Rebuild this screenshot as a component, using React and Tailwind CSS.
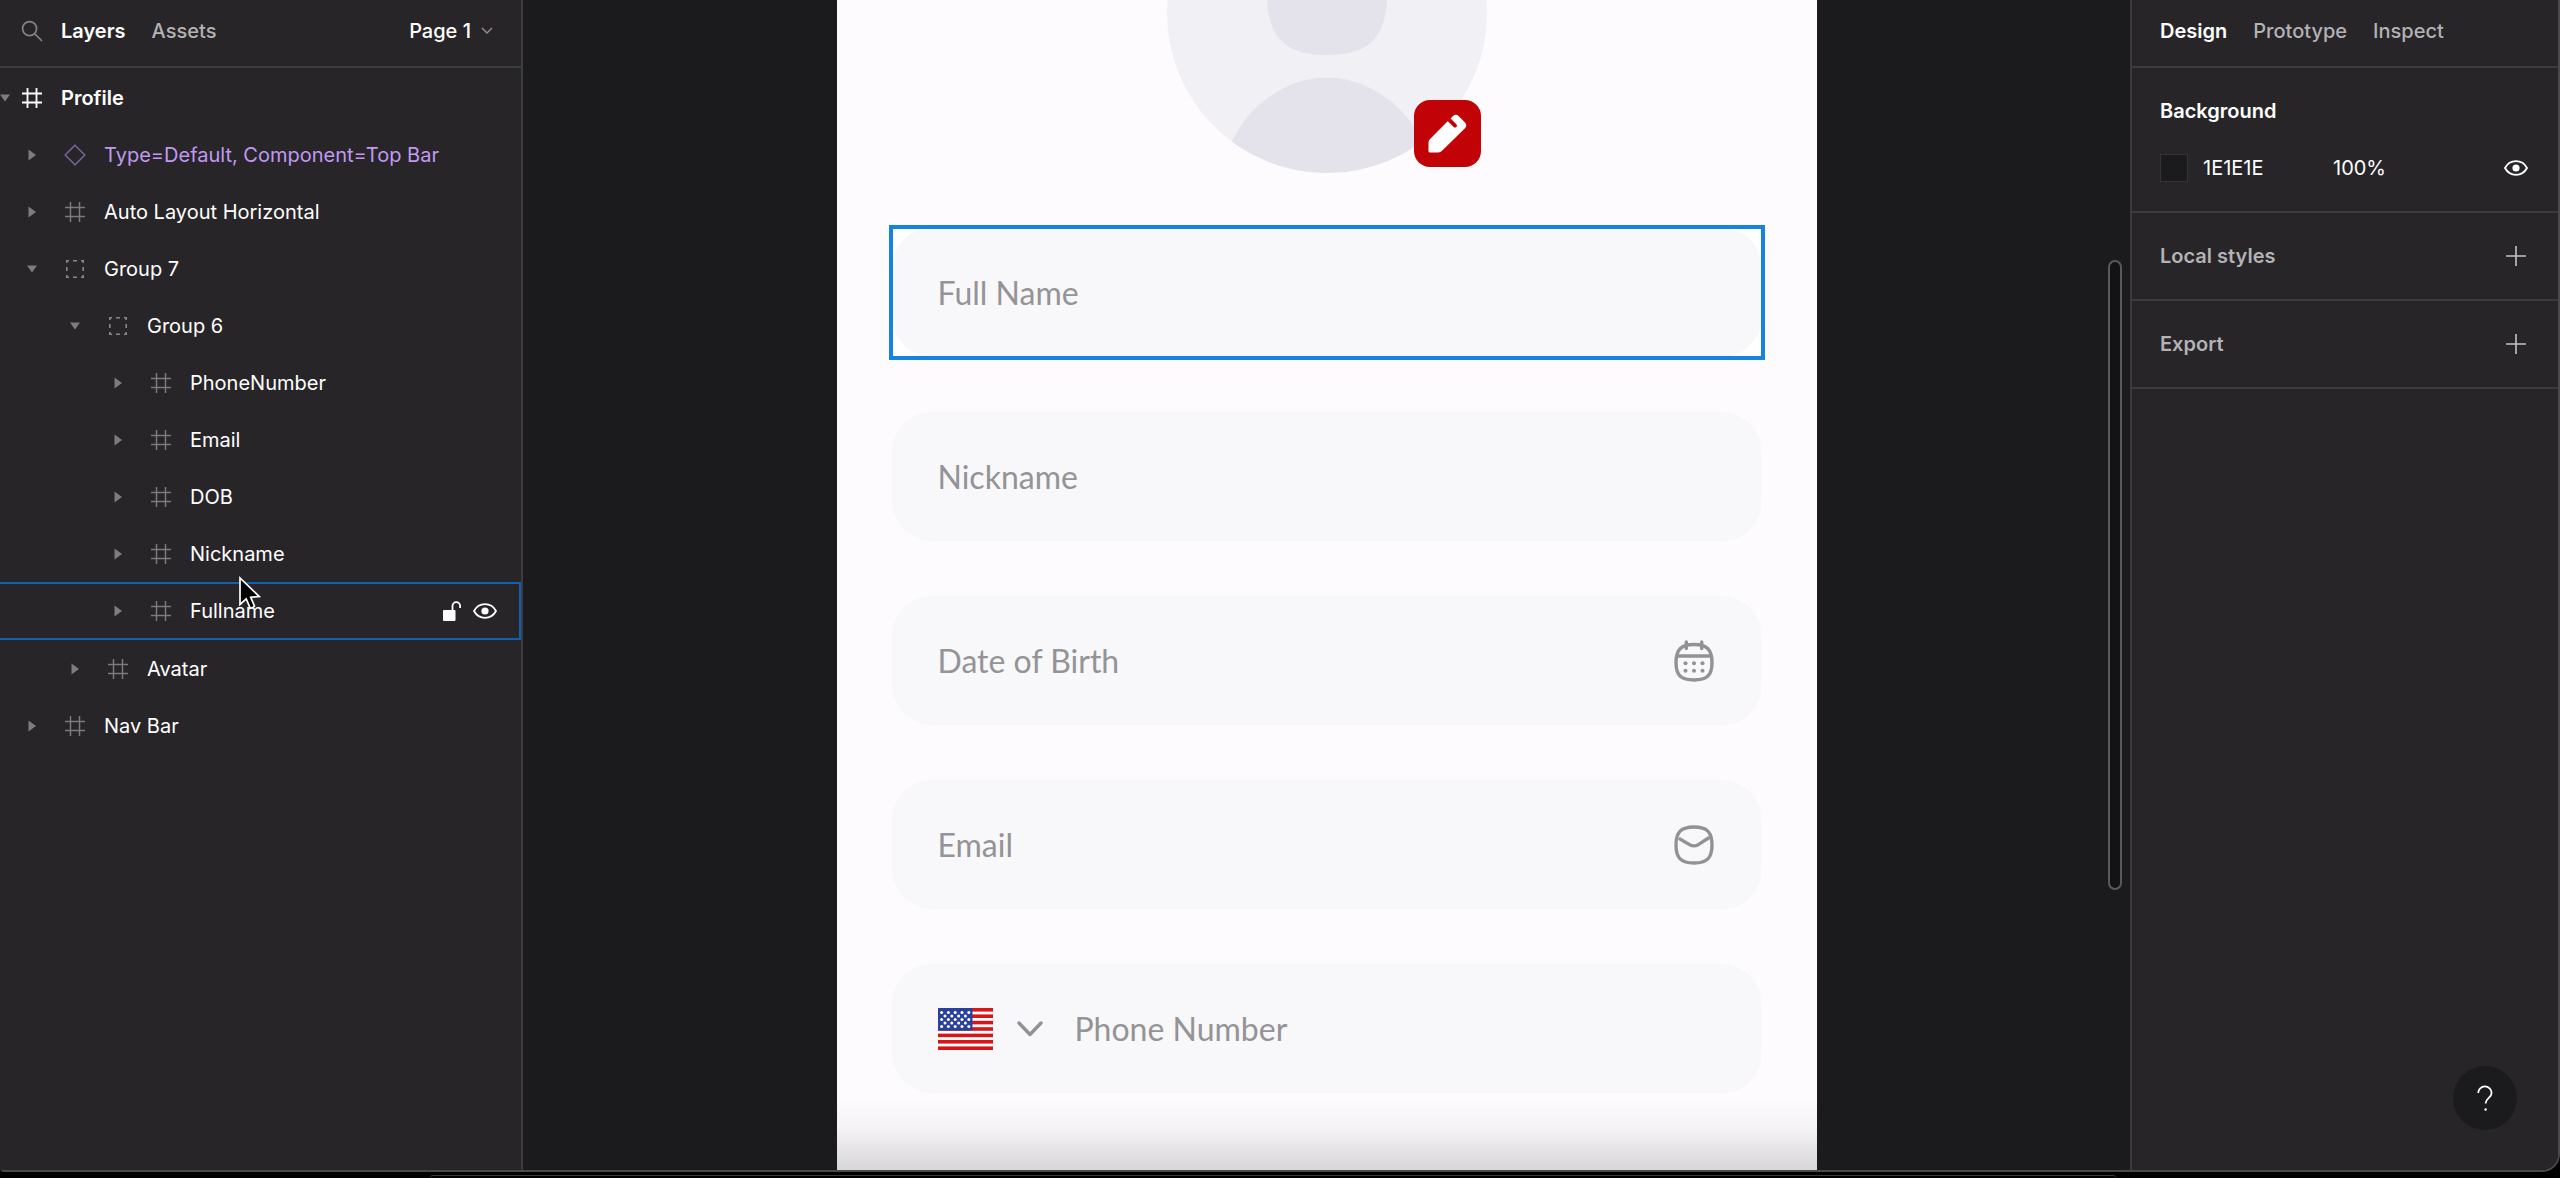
import { useState } from "react";

const LAYERS = [
    { name: "Profile", depth: 0, icon: "frame", open: true },
    { name: "Type=Default, Component=Top Bar", depth: 1, icon: "component" },
    { name: "Auto Layout Horizontal", depth: 1, icon: "frame" },
    { name: "Group 7", depth: 1, icon: "group", open: true },
    { name: "Group 6", depth: 2, icon: "group", open: true },
    { name: "PhoneNumber", depth: 3, icon: "frame" },
    { name: "Email", depth: 3, icon: "frame" },
    { name: "DOB", depth: 3, icon: "frame" },
    { name: "Nickname", depth: 3, icon: "frame" },
    { name: "Fullname", depth: 3, icon: "frame", hovered: true },
    { name: "Avatar", depth: 2, icon: "frame" },
    { name: "Nav Bar", depth: 1, icon: "frame" },
];

const INDENT = ["pl-0", "pl-[10px]", "pl-[53px]", "pl-[96px]"];

/* ---------- Icons ---------- */

function SearchIcon() {
    return (
        <svg width="22" height="22" viewBox="0 0 22 22" fill="none" stroke="#828184" strokeWidth="1.7">
            <circle cx="8.6" cy="8.6" r="7" />
            <path d="M13.8 13.8L21 21" />
        </svg>
    );
}

function CaretIcon({ open }) {
    return (
        <svg width="10" height="12" viewBox="0 0 10 12" fill="#7d7c7f">
            {open ? <path d="M0 2.500h10L5 9.500z" /> : <path d="M1.500 0.500v11L9 6z" />}
        </svg>
    );
}

function LayerIcon({ type, active }) {
    if (type === "component") {
        return (
            <svg width="22" height="22" viewBox="0 0 22 22" fill="none" stroke="#75619a" strokeWidth="1.6">
                <path d="M11 1.2L20.8 11L11 20.8L1.2 11z" />
            </svg>
        );
    }
    if (type === "group") {
        return (
            <svg width="20" height="20" viewBox="0 0 20 20" fill="none" stroke="#878689" strokeWidth="1.6">
                <path d="M1.8 4V1.8H4M8 1.8h4M16 1.8h2.2V4M18.2 8v4M18.2 16v2.2H16M12 18.2H8M4 18.2H1.8V16M1.8 12V8" />
            </svg>
        );
    }
    return (
        <svg
            width="20"
            height="20"
            viewBox="0 0 20 20"
            fill="none"
            stroke={active ? "#ffffff" : "#7b7a7d"}
            strokeWidth={active ? 1.8 : 1.5}
        >
            <path d="M5.5 0v20M14.5 0v20M0 5.5h20M0 14.5h20" />
        </svg>
    );
}

function EyeIcon() {
    return (
        <svg width="24" height="16" viewBox="0 0 24 16" fill="none" stroke="#ffffff" strokeWidth="1.8">
            <path d="M1 8C3.4 3.6 7.4 1.2 12 1.2S20.600 3.600 23 8c-2.400 4.400-6.400 6.800-11 6.800S3.400 12.400 1 8z" />
            <circle cx="12" cy="8" r="3.6" fill="#ffffff" stroke="none" />
        </svg>
    );
}

function UnlockIcon() {
    return (
        <svg width="18" height="20" viewBox="0 0 18 20" fill="none">
            <rect x="0" y="9" width="12.500" height="11" rx="1" fill="#ffffff" />
            <path d="M9.500 9V5a3.800 3.800 0 0 1 7.600 0v2" stroke="#ffffff" strokeWidth="1.8" />
        </svg>
    );
}

function PlusIcon() {
    return (
        <svg width="20" height="20" viewBox="0 0 20 20" stroke="#c4c3c6" strokeWidth="1.6">
            <path d="M10 0v20M0 10h20" />
        </svg>
    );
}

function CalendarIcon() {
    return (
        <svg width="40" height="42" viewBox="0 0 40 42" fill="none" stroke="#929194" strokeWidth="3.400" strokeLinecap="round">
            <path d="M20 4.500C32.500 4.500 38 9 38 22.500S32.500 40 20 40S2 36 2 22.500S7.500 4.500 20 4.500z" />
            <path d="M3 16h34M12.300 2v6.500M27.700 2v6.500" />
            <g fill="#929194" stroke="none">
                <circle cx="11.500" cy="23.300" r="2" />
                <circle cx="20" cy="23.300" r="2" />
                <circle cx="28.500" cy="23.300" r="2" />
                <circle cx="11.500" cy="30.700" r="2" />
                <circle cx="20" cy="30.700" r="2" />
                <circle cx="28.500" cy="30.700" r="2" />
            </g>
        </svg>
    );
}

function MailIcon() {
    return (
        <svg width="40" height="40" viewBox="0 0 40 40" fill="none" stroke="#929194" strokeWidth="3.400" strokeLinecap="round">
            <path d="M20 2C33 2 38 7 38 20S33 38 20 38S2 33 2 20S7 2 20 2z" />
            <path d="M6 14l9.500 5.600c2.900 1.700 5.900 1.700 8.800 0L34.500 13" />
        </svg>
    );
}

function FlagIcon() {
    const stripes = [0, 1, 2, 3, 4, 5, 6];
    const rows = [0, 1, 2, 3, 4];
    return (
        <svg width="55" height="42" viewBox="0 0 55 42">
            <rect width="55" height="42" fill="#ffffff" />
            {stripes.map((i) => (
                <rect key={i} y={i * 6.4} width="55" height="3.6" fill="#d91518" />
            ))}
            <rect width="34.500" height="22.600" fill="#2a419c" />
            {rows.map((r) =>
                [0, 1, 2, 3, 4].slice(0, r % 2 ? 4 : 5).map((c) => (
                    <circle
                        key={`${r}-${c}`}
                        cx={3.6 + c * 6.8 + (r % 2 ? 3.4 : 0)}
                        cy={4.5 + r * 3.5}
                        r="1.5"
                        fill="#ffffff"
                    />
                )),
            )}
        </svg>
    );
}

function PencilIcon() {
    return (
        <svg width="39" height="39" viewBox="0 0 39 39" fill="#ffffff">
            <path d="M18.200 8.800L1.800 25.200Q0.500 26.600 0.500 28.400V37q0 1.500 1.500 1.500h8.400q2 0 3.400-1.400L37 14.200q2.600-3 0-5.800L30.600 2q-2.800-2.600-5.600 0l-2.400 2.600l5.700 5.700q1.300 1.500 0 2.700q-1.400 1.200-2.700 0l-5.200-5.200q-1.200-.8-2.200 1z" />
        </svg>
    );
}

function AvatarPicture() {
    return (
        <svg width="320" height="320" viewBox="0 0 320 320">
            <defs>
                <clipPath id="avatar-clip">
                    <circle cx="160" cy="160" r="160" />
                </clipPath>
            </defs>
            <g clipPath="url(#avatar-clip)">
                <rect width="320" height="320" fill="#f1f0f5" />
                <path d="M160 80C205 80 220 95 220 140C220 184 203 202 160 202S100 184 100 140C100 95 115 80 160 80z" fill="#e4e3eb" />
                <path d="M160 224.500C198 224.500 237 249 256 290V340H64V290C83 249 122 224.500 160 224.500z" fill="#e4e3eb" />
            </g>
        </svg>
    );
}

function CursorIcon() {
    return (
        <svg width="22" height="34" viewBox="0 0 22 34" fill="#000000" stroke="#ffffff" strokeWidth="1.7">
            <path d="M1 2v26.500l6.200-5.600l4 9.200q2.800.2 4.300-2l-3.800-8.900l8.600-.6z" />
        </svg>
    );
}

/* ---------- Left panel ---------- */

function LayerRow({ layer }) {
    const isRoot = layer.depth === 0;

    return (
        <li
            className={`relative flex items-center ${INDENT[layer.depth]} ${
                layer.hovered ? "h-[58px] border-y-2 border-r-2 border-[#1260b2]" : "h-[57px]"
            }`}
        >
            <span className={`flex shrink-0 justify-center ${isRoot ? "w-[10px]" : "w-[43px]"}`}>
                <CaretIcon open={layer.open} />
            </span>
            <span className="flex w-[43px] shrink-0 justify-center">
                <LayerIcon type={layer.icon} active={isRoot} />
            </span>
            <span
                className={`pl-2 whitespace-nowrap ${isRoot ? "font-semibold" : ""} ${
                    layer.icon === "component" ? "text-[#c09af0]" : "text-white"
                }`}
            >
                {layer.name}
            </span>
            {layer.hovered && (
                <>
                    <span className="ml-auto flex items-center gap-3 pr-[22px]">
                        <button type="button" aria-label="Unlock layer">
                            <UnlockIcon />
                        </button>
                        <button type="button" aria-label="Hide layer">
                            <EyeIcon />
                        </button>
                    </span>
                    <span className="pointer-events-none absolute -top-2 left-[239px]">
                        <CursorIcon />
                    </span>
                </>
            )}
        </li>
    );
}

function LayersPanel() {
    return (
        <aside className="w-[523px] shrink-0 border-r-2 border-[#3c3b3f] bg-[#272528]">
            <div className="flex h-[68px] items-center border-b-2 border-[#3c3b3f] pr-7 pb-[5px] pl-[21px]">
                <button type="button" aria-label="Search layers">
                    <SearchIcon />
                </button>
                <button type="button" className="ml-[18px] font-semibold text-white">
                    Layers
                </button>
                <button type="button" className="ml-[26px] font-medium text-[#b3b2b5]">
                    Assets
                </button>
                <button type="button" className="ml-auto flex items-center gap-2.5 font-medium text-white">
                    Page 1
                    <svg width="12" height="8" viewBox="0 0 12 8" fill="none" stroke="#8c8b8e" strokeWidth="1.5">
                        <path d="M1 1l5 5l5-5" />
                    </svg>
                </button>
            </div>
            <ul className="pt-px">
                {LAYERS.map((layer) => (
                    <LayerRow key={layer.name} layer={layer} />
                ))}
            </ul>
        </aside>
    );
}

/* ---------- Canvas ---------- */

function Field({ label, icon, prefix, selected }) {
    return (
        <div className={`relative ${selected ? "bg-white" : ""}`}>
            <label className="flex h-[129px] items-center rounded-[40px] bg-[#f8f7fa] pr-12 pl-[46px]">
                {prefix}
                <input
                    type="text"
                    aria-label={label}
                    placeholder={label}
                    className="min-w-0 flex-1 bg-transparent font-[Lato,sans-serif] text-[32px] leading-10 text-[#949396] outline-none placeholder:text-[#949396]"
                />
                {icon}
            </label>
            {selected && (
                <span className="pointer-events-none absolute -inset-[3px] border-4 border-[#1583e0]" />
            )}
        </div>
    );
}

function Canvas() {
    return (
        <main className="relative flex min-w-0 flex-1 justify-center overflow-hidden bg-[#1b1a1d]">
            <div className="relative flex w-[980px] flex-col overflow-hidden bg-[#fdfbfe] px-[55px]">
                <div className="relative -mt-[147px] self-center">
                    <AvatarPicture />
                    <button
                        type="button"
                        aria-label="Edit avatar"
                        className="absolute right-1.5 bottom-1.5 flex h-[67px] w-[67px] items-center justify-center rounded-2xl bg-[#c10206]"
                    >
                        <PencilIcon />
                    </button>
                </div>
                <div className="mt-[55px] flex flex-col gap-[55px]">
                    <Field label="Full Name" selected />
                    <Field label="Nickname" />
                    <Field label="Date of Birth" icon={<CalendarIcon />} />
                    <Field label="Email" icon={<MailIcon />} />
                    <Field
                        label="Phone Number"
                        prefix={
                            <button type="button" aria-label="Country code" className="mr-8 flex items-center gap-6">
                                <FlagIcon />
                                <svg
                                    width="26"
                                    height="16"
                                    viewBox="0 0 26 16"
                                    fill="none"
                                    stroke="#929194"
                                    strokeWidth="3.400"
                                    strokeLinecap="round"
                                    strokeLinejoin="round"
                                >
                                    <path d="M2 2l11 11.500L24 2" />
                                </svg>
                            </button>
                        }
                    />
                </div>
                {/* Fade at the end of the frame */}
                <div className="pointer-events-none absolute inset-x-0 bottom-0 h-[72px] bg-linear-to-b from-transparent via-[#00000008] via-40% to-[#00000026]" />
            </div>

            {/* Scrollbar */}
            <div className="absolute top-[260px] right-2 h-[630px] w-[14px] rounded-full border-2 border-[#5a595d] bg-[#131215]" />
        </main>
    );
}

/* ---------- Right panel ---------- */

function CollapsedSection({ title }) {
    return (
        <section className="flex h-[88px] items-center justify-between border-b-2 border-[#3c3b3f] pr-8 pl-7">
            <h2 className="font-semibold text-[#b3b2b5]">{title}</h2>
            <button type="button" aria-label={`Add ${title}`}>
                <PlusIcon />
            </button>
        </section>
    );
}

function DesignPanel() {
    const [hex, setHex] = useState("1E1E1E");
    const [opacity, setOpacity] = useState("100%");

    return (
        <aside className="relative w-[428px] shrink-0 border-l-2 border-[#3c3b3f] bg-[#272528]">
            <div className="flex h-[68px] items-center gap-[26px] border-b-2 border-[#3c3b3f] pb-[5px] pl-7 font-medium text-[#b3b2b5]">
                <button type="button" className="font-semibold text-white">
                    Design
                </button>
                <button type="button">Prototype</button>
                <button type="button">Inspect</button>
            </div>

            <section className="h-[145px] border-b-2 border-[#3c3b3f] pt-[29px] pr-[30px] pl-7">
                <h2 className="font-semibold text-white">Background</h2>
                <div className="mt-[29px] flex items-center text-white">
                    <span className="h-7 w-7 border border-[#353438] bg-[#1b1a1d]" />
                    <input
                        type="text"
                        aria-label="Background color"
                        value={hex}
                        onChange={(e) => setHex(e.target.value)}
                        className="ml-[15px] w-[130px] bg-transparent outline-none"
                    />
                    <input
                        type="text"
                        aria-label="Background opacity"
                        value={opacity}
                        onChange={(e) => setOpacity(e.target.value)}
                        className="w-20 bg-transparent outline-none"
                    />
                    <button type="button" aria-label="Toggle background" className="ml-auto">
                        <EyeIcon />
                    </button>
                </div>
            </section>

            <CollapsedSection title="Local styles" />
            <CollapsedSection title="Export" />

            <button
                type="button"
                aria-label="Help"
                className="absolute right-[41px] bottom-10 flex h-16 w-16 items-center justify-center rounded-full bg-[#1b1a1d]"
            >
                <svg width="16" height="26" viewBox="0 0 16 26" fill="none" stroke="#ffffff" strokeWidth="1.8">
                    <path d="M1.200 8a6.700 6.700 0 1 1 13.400 0c0 4.800-6 5-6 10.500" />
                    <circle cx="8.600" cy="24.500" r="1.200" fill="#ffffff" stroke="none" />
                </svg>
            </button>
        </aside>
    );
}

export default function App() {
    return (
        <div className="flex h-screen flex-col overflow-hidden bg-black font-[Inter,sans-serif] text-[20px] leading-7">
            <div className="flex min-h-0 flex-1 overflow-hidden rounded-br-[18px] rounded-bl-sm border-r-2 border-b-2 border-[#4a494c]">
                <LayersPanel />
                <Canvas />
                <DesignPanel />
            </div>
            {/* Top edge of the window behind */}
            <div className="mt-[3px] mr-[444px] ml-[430px] h-[3px] rounded-t-full border-t border-[#3a393c]" />
        </div>
    );
}
